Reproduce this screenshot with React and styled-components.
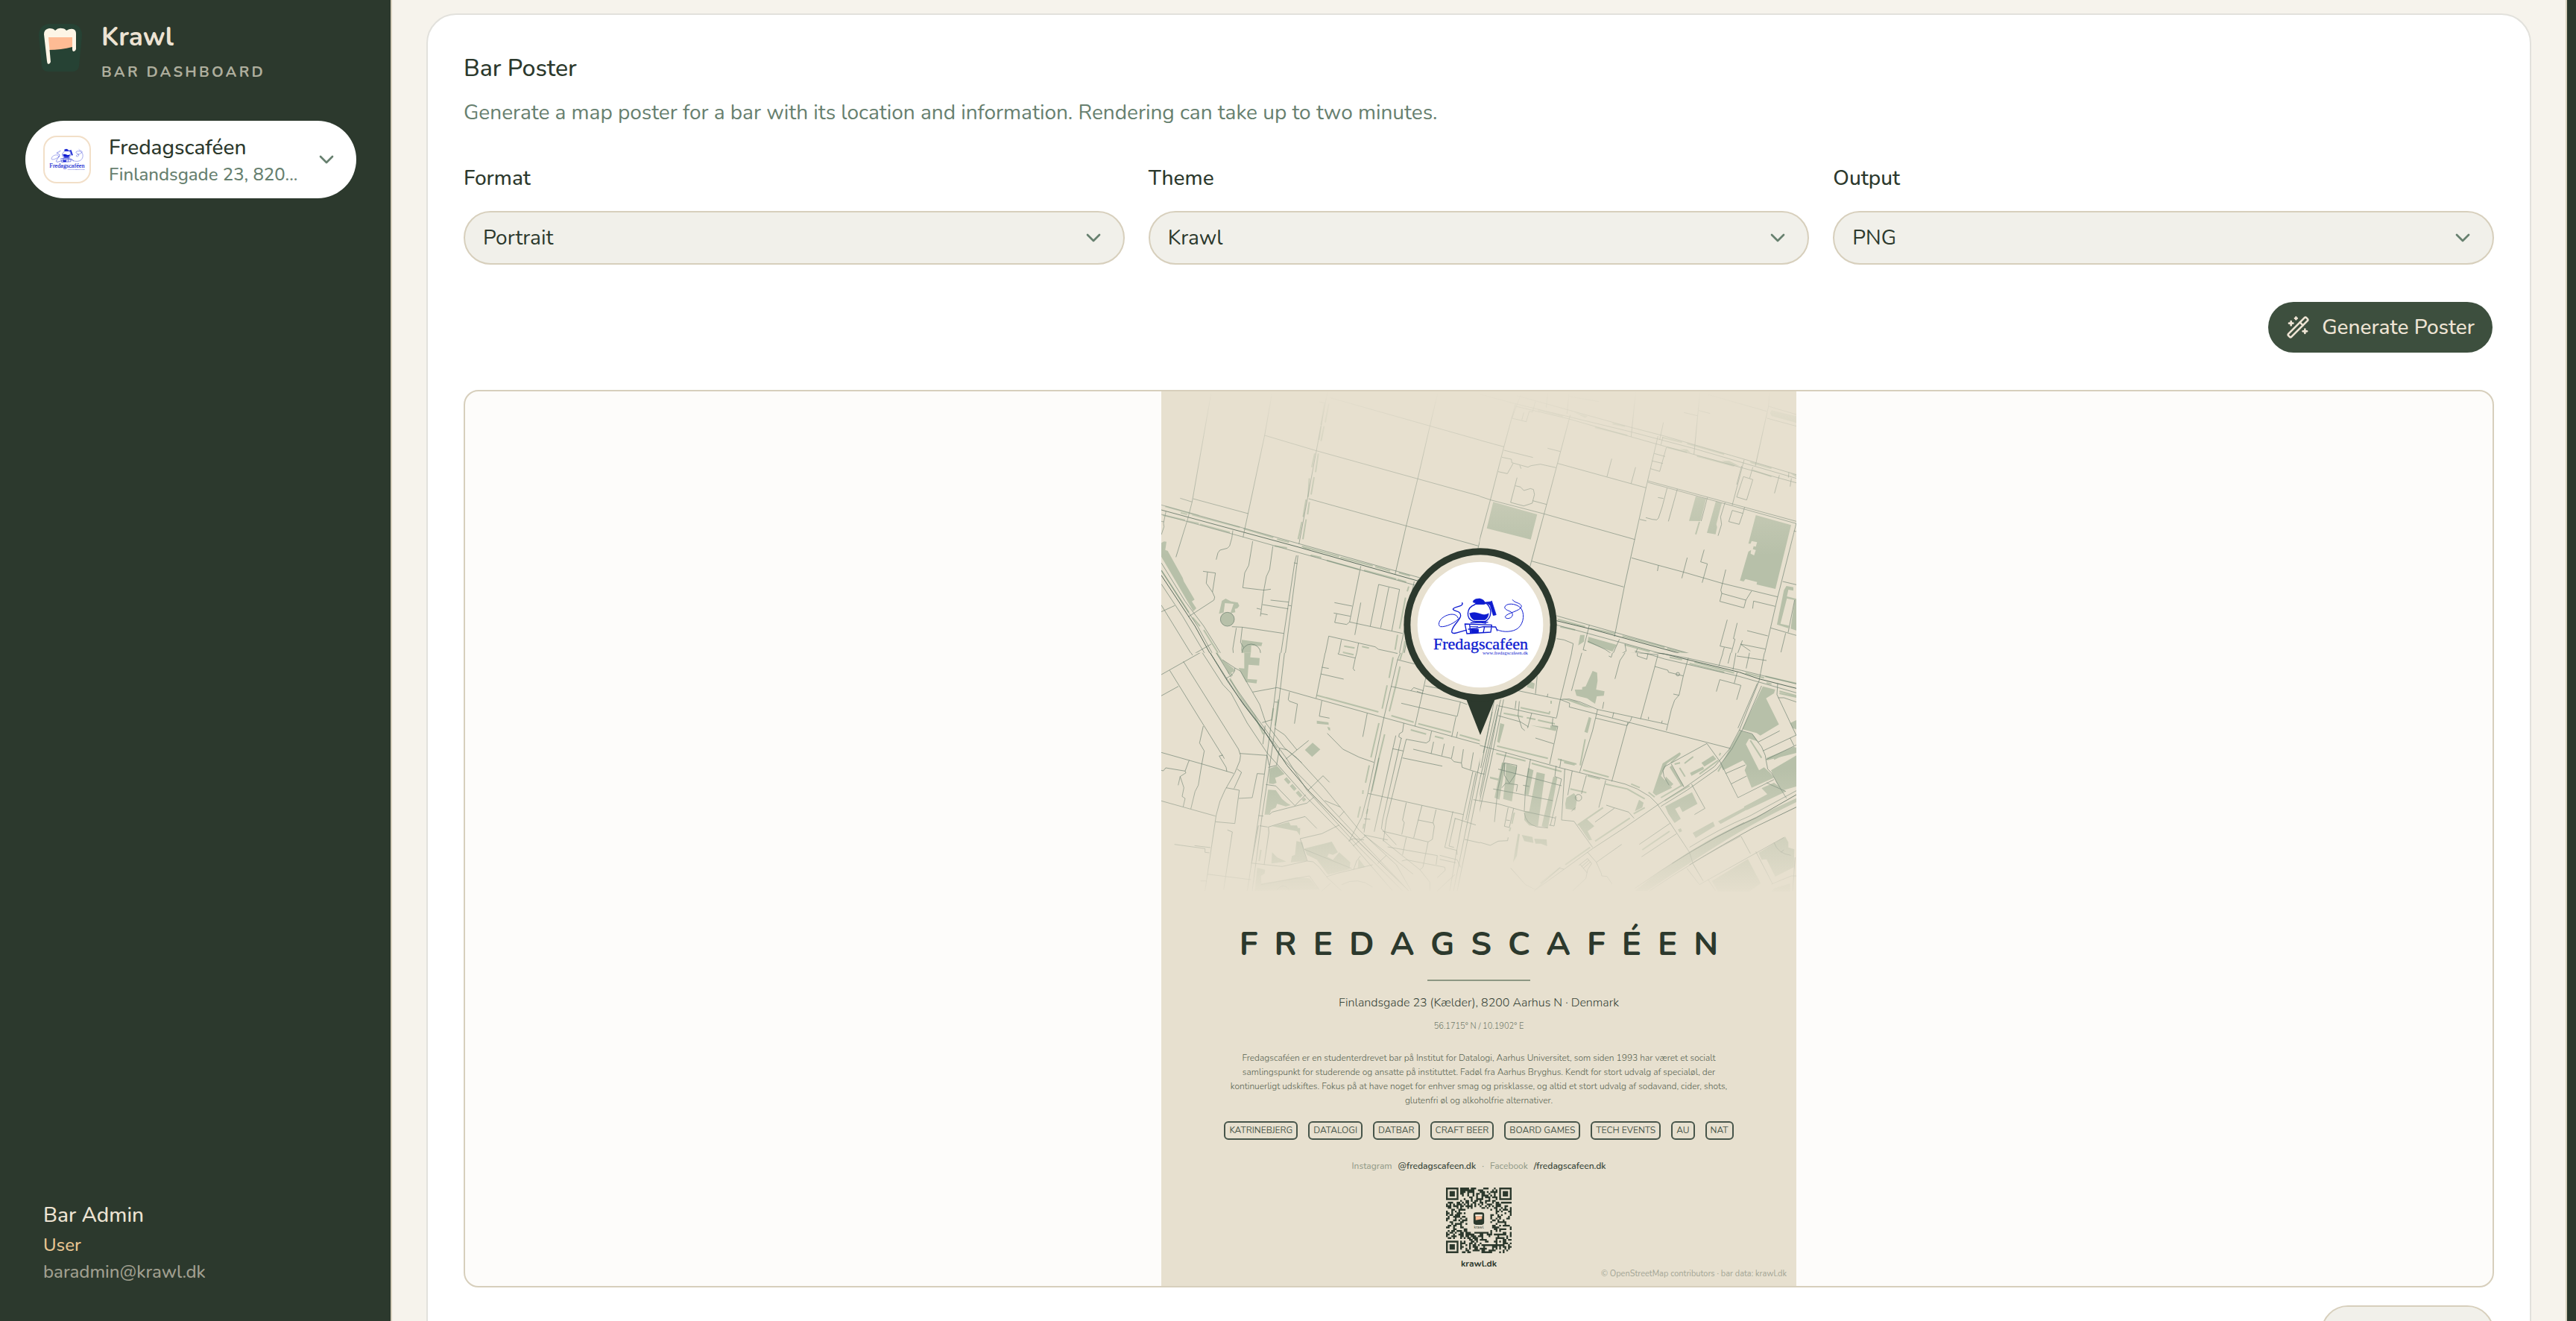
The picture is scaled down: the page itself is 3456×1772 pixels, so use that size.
import React, { useState } from 'react';
import styled, { createGlobalStyle } from 'styled-components';
import { ChevronDown, Download, WandSparkles } from 'lucide-react';

const GlobalStyle = createGlobalStyle`
  :root {
    --forest: #2c392d;
    --moss: #3d4f3e;
    --sage: #67806f;
    --cream: #ede3d3;
    --paper: #e7e0cf;
    --line: #d7cfbc;
    --fill: #f1f0ea;
  }

  * { box-sizing: border-box; }

  body {
    margin: 0;
    overflow: hidden;
    background: #f6f3ec;
    color: var(--forest);
    font-family: Nunito, Lato, sans-serif;
    font-size: 28px;
    line-height: 40px;
  }

  button, select { font: inherit; color: inherit; cursor: pointer; }
  h1, h2, h3, p, ul { margin: 0; padding: 0; }
  svg { display: block; flex: none; }
`;

const Shell = styled.div`
  display: flex;
  height: 100vh;
  overflow: hidden;
`;

/* ---------- sidebar ---------- */

const Sidebar = styled.aside`
  display: flex;
  flex-direction: column;
  flex: none;
  width: 526px;
  padding: 32px 46px 48px 34px;
  background: var(--forest);
  border-right: 2px solid var(--line);
`;

const Brand = styled.div`
  display: flex;
  align-items: flex-start;
  gap: 26px;
  padding-left: 18px;
`;

const BrandText = styled.div`
  display: flex;
  flex-direction: column;
  gap: 16px;
  padding-top: 2px;
`;

const BrandName = styled.h1`
  color: var(--cream);
  font-size: 35px;
  font-weight: 700;
  line-height: 32px;
`;

const BrandSub = styled.p`
  color: #aeae9d;
  font-size: 20px;
  font-weight: 700;
  letter-spacing: 0.16em;
  line-height: 30px;
  text-transform: uppercase;
`;

const Switcher = styled.button`
  display: flex;
  align-items: center;
  gap: 24px;
  height: 104px;
  margin-top: 50px;
  padding: 0 24px;
  border: none;
  border-radius: 52px;
  background: #fff;
  color: var(--forest);
  text-align: left;
`;

const Avatar = styled.span`
  display: flex;
  align-items: center;
  justify-content: center;
  flex: none;
  width: 64px;
  height: 64px;
  border: 2px solid #f2dfc8;
  border-radius: 18px;
  background: #fff;
`;

const SwitcherText = styled.span`
  display: flex;
  flex-direction: column;
  flex: 1;
  min-width: 0;
  padding-top: 4px;
  line-height: 36px;
  white-space: nowrap;
`;

const SwitcherName = styled.span`
  font-weight: 500;
`;

const SwitcherAddress = styled.span`
  color: var(--sage);
  font-size: 24px;
  font-weight: 500;
`;

const Account = styled.div`
  display: flex;
  flex-direction: column;
  margin-top: auto;
  padding-left: 24px;
  font-size: 24px;
  font-weight: 500;
  line-height: 36px;
`;

const AccountName = styled.p`
  margin-bottom: 2px;
  color: var(--cream);
  font-size: 28px;
  line-height: 40px;
`;

const AccountRole = styled.p`
  color: #e8c591;
`;

const AccountMail = styled.p`
  color: #a09f8f;
`;

/* ---------- content ---------- */

const Main = styled.main`
  flex: 1;
  min-width: 0;
  padding: 18px 46px 0;
`;

const Rail = styled.div`
  flex: none;
  width: 14px;
  border-left: 2px solid var(--line);
  background: var(--forest);
`;

const Card = styled.section`
  display: flex;
  flex-direction: column;
  padding: 49px 48px 48px;
  border: 2px solid #e2e1dc;
  border-radius: 40px;
  background: #fff;
`;

const CardTitle = styled.h2`
  font-size: 32px;
  font-weight: 500;
  line-height: 46px;
`;

const CardHint = styled.p`
  margin-top: 16px;
  color: var(--sage);
`;

const Fields = styled.div`
  display: grid;
  grid-template-columns: repeat(3, 1fr);
  gap: 32px;
  margin-top: 48px;
`;

const Field = styled.div`
  display: flex;
  flex-direction: column;
  gap: 24px;

  label { font-weight: 500; }
`;

const SelectBox = styled.div`
  display: grid;
  align-items: center;

  select, svg { grid-area: 1 / 1; }

  select {
    appearance: none;
    width: 100%;
    height: 72px;
    padding: 0 72px 0 24px;
    border: 2px solid var(--line);
    border-radius: 36px;
    background: var(--fill);
  }

  svg {
    justify-self: end;
    margin-right: 26px;
    color: var(--sage);
    pointer-events: none;
  }
`;

const Actions = styled.div`
  display: flex;
  justify-content: flex-end;
  margin-top: ${p => p.$gap}px;
`;

const Button = styled.button`
  display: flex;
  align-items: center;
  justify-content: center;
  gap: 16px;
  height: 72px;
  min-width: 232px;
  padding: 0 24px;
  border: 2px solid ${p => (p.$primary ? 'transparent' : 'var(--line)')};
  border-radius: 36px;
  background: ${p => (p.$primary ? 'var(--moss)' : 'var(--fill)')};
  background-clip: padding-box;
  color: ${p => (p.$primary ? 'var(--cream)' : 'var(--forest)')};
  font-weight: 500;
`;

const Preview = styled.div`
  display: flex;
  justify-content: center;
  margin-top: 48px;
  overflow: hidden;
  border: 2px solid var(--line);
  border-radius: 20px;
  background: #fdfcfa;
`;

/* ---------- poster ---------- */

const Poster = styled.article`
  display: flex;
  flex-direction: column;
  align-items: center;
  width: 852px;
  height: 1200px;
  background: var(--paper);
  text-align: center;
`;

const PosterTitle = styled.h3`
  margin-top: 32px;
  font-size: 44px;
  font-weight: 700;
  letter-spacing: 0.5em;
  line-height: 60px;
  text-indent: 0.5em;
`;

const Rule = styled.hr`
  width: 138px;
  height: 2px;
  margin: 17px 0 0;
  border: none;
  background: #8c9783;
`;

const PosterAddress = styled.p`
  margin-top: 17px;
  color: #364337;
  font-size: 16px;
  font-weight: 300;
  line-height: 24px;
`;

const PosterCoords = styled.p`
  margin-top: 12px;
  color: #6f7a6a;
  font-size: 11px;
  font-weight: 300;
  line-height: 16px;
`;

const PosterText = styled.p`
  margin-top: 25px;
  color: #56624f;
  font-size: 12px;
  font-weight: 300;
  line-height: 19px;
  white-space: pre-line;
`;

const Tags = styled.ul`
  display: flex;
  gap: 14px;
  margin-top: 18px;
  list-style: none;

  li {
    height: 25px;
    padding: 0 5px;
    border: 2px solid #47554a;
    border-radius: 6px;
    color: #4a574b;
    font-size: 12px;
    line-height: 20px;
  }
`;

const Socials = styled.p`
  display: flex;
  gap: 8px;
  margin-top: 25px;
  color: #8f9886;
  font-size: 12px;
  line-height: 20px;

  a {
    color: #3c4a3d;
    font-weight: 600;
    text-decoration: none;
  }
`;

const QrCaption = styled.p`
  margin-top: 7px;
  font-size: 12px;
  font-weight: 700;
  line-height: 14px;
`;

const Attribution = styled.p`
  align-self: flex-end;
  padding-right: 13px;
  color: #a3a595;
  font-size: 11px;
  line-height: 14px;
`;

const QrArt = styled.svg`
  margin-top: 19px;
`;

/* Map drawing, one entry per tile. Tiles are drawn at 3x and scaled down. */
const tiles = [
  {
    at: [-18, -15],
    clip: [0, 0, 1336, 1097],
    parks: `M54 655L65 649 75 650 70 683 80 687 140 795 145 810 188 883 177 890 195 918 183 930 54 710Z
      M298 888L313 879 335 890 362 895 368 908 360 918 350 920 352 934 332 938 345 900 310 897 305 935 286 940Z
      M378 1045L461 1056 457 1070 416 1068 414 1112 385 1112 375 1085Z`,
    verges: `M70 508L205 545M204 548L370 592M132 533L158 540M178 541L212 551M385 597L505 633M520 640L568 652M620 668L770 710M625 672L655 680M660 680L705 692
      M775 713L905 747M915 750L975 768M1010 775L1055 788M60 543L150 563M160 568L205 577M210 580L330 613M510 667L560 675M655 704L698 714M720 725L850 762M870 765L1000 800M1005 802L1040 812
      M711 95L697 180M697 185L688 240M672 295L660 350M650 395L645 470M637 480L625 550M620 570L605 640M728 95L714 170M709 185L697 245M686 295L675 370M669 390L657 460M650 490L643 540M637 560L624 640
      M1050 830L1044 850M1037 875L1013 1000M1005 1025L995 1085M1035 1050L1025 1110M790 1070L832 1078M862 1072L890 1078M785 1095L830 1105
      M54 765L165 935M180 955L210 990M225 1005L290 1110`,
    roads: `M255 50L178 490 160 560 113 712M130 475L178 490M182 477L404 537M500 50L470 222 383 632M470 222L682 285 1350 470
      M722 50L608 660M690 87L715 93M732 70L1350 245M647 477L1330 667M1167 50L1135 185 1087 393 1040 585 995 782M1350 590L1328 680
      M54 502L1095 795M54 540L380 630 1075 825M342 605L338 635 329 667 320 676 290 684 282 695 275 722
      M422 648L406 745 390 775 382 835 468 845 495 841M503 668L490 762 477 790 466 850 453 950
      M222 769L272 776 260 853M240 772L235 817 260 853 269 873 266 885 163 952M494 885L567 893M461 903L565 920M438 918L455 922M455 939L482 944
      M598 705L590 740 534 1110M604 705L600 740 552 1110M588 735L602 738M565 906L577 908
      M857 748L812 973 1025 1019M857 895L833 1025M751 895L822 909M748 937L815 950M760 940L752 975 800 983 812 973
      M929 822L1013 842 982 1008M929 822L895 990M970 833L937 997M1072 810L1010 1110M1088 800L1030 1110
      M712 1110L728 1030 915 1073 928 1083 1008 1100M779 1045L768 1103 825 1112M848 1058L838 1110
      M338 992L380 994 547 1019M356 997L342 1080 345 1110M380 994L373 1055 385 1075
      M54 735L150 890 225 990 300 1110M54 765L200 990 265 1110M54 820L140 950 235 1110M54 905L180 1110M54 932L108 907M178 1106L255 1062
      M73 527L63 575 65 590 54 622M54 568L65 570`,
    mains: 'M54 522L600 670 1088 808M54 785L190 990 256 1110',
    rings: [[320, 962, 28, true], [416, 1100, 38, false]],
  },
  {
    at: [422, -15],
    clip: [16, 0, 1274, 1097],
    parks: `M70 490L247 540 221 641 44 596Z M885 467L927 477 904 567 858 566Z M966 487L990 495 968 580 971 592 965 620 930 614Z
      M1127 543L1269 583 1206 840 1130 822 1132 812 1085 800 1078 810 1063 806 1097 690 1108 683 1106 698 1120 705 1127 683 1115 680 1118 668 1127 670 1132 652 1110 647 1106 658 1097 658Z
      M1190 121L1290 145 1290 172 1190 144 1184 132Z M1250 828L1278 833 1278 847 1258 843 1252 870 1290 880 1290 1007 1267 1000 1283 885 1252 878 1226 980 1260 988 1258 998 1212 983 1240 845Z
      M453 1033L567 1065 550 1092 530 1085 450 1055Z M420 1025L438 1025 435 1052 412 1067Z M395 128L450 145 440 152Z M990 325L1020 325 1060 345 1020 340Z M820 277L850 278 865 292Z M1265 375L1290 380 1290 390Z`,
    verges: `M550 175L600 185M750 230L830 250M850 255L1000 298M250 120L350 145M480 190L610 222M770 270L850 290M890 305L1040 345M1115 362L1190 388M1105 330L1190 355
      M330 962L440 992M460 998L560 1020M590 1030L760 1075M770 1080L880 1108M340 992L400 1005M600 1065L700 1092M900 570L885 620`,
    roads: `M165 62L625 190 760 225 1080 318 1290 380M0 52L160 95 625 208 878 275 1290 395M160 105L372 155 625 228 875 298 1290 413
      M180 60L145 153M160 95L113 268 59 480 5 680M0 237L113 268M113 282L230 311M105 310L143 318 145 332 210 350 222 344 260 338 323 352M150 335L127 376 90 368M177 343L182 356
      M145 153L203 167 215 125 228 128 240 85M193 130L185 160M290 50L283 110M375 50L367 135M375 65L495 86M380 140L285 500 218 750
      M289 274L340 287M166 392L140 492 193 506 227 495 236 460 232 440 220 436 193 444 180 430 160 425M229 485L285 500M0 462L60 482 275 538 640 641M330 335L685 433M547 316L528 388M643 350L625 416
      M643 50L625 228M755 170L740 240M733 225L725 260 685 433 600 820 558 1032M753 228L745 260M767 270L740 367 703 356M718 295L762 307M710 325L753 335
      M902 50L893 142 878 298M837 130L892 143M897 122L943 134M1182 50L1178 105 1125 345M935 58L1170 125M1178 105L1290 138M1172 153L1290 185
      M1080 320L1032 503M1070 345L1050 420M1115 350L1102 395M1077 388L1115 400 1090 482 1050 470ZM1222 382L1202 455M1270 395L1265 428M1260 370L1258 392
      M692 405L1290 568M692 411L1290 577M770 434L750 510 735 555 728 562 710 560 684 553M733 472L755 476M660 560L686 566M811 438L775 568M932 472L907 567
      M1003 492L985 550 989 580 975 626M1032 524L1075 536 1060 580 1018 569ZM1082 510L1075 536M1290 575L1215 872 1160 1110M1235 810L1290 823M1280 607L1290 609
      M627 715L735 745 835 772 990 817 1215 872M735 745L731 768M851 714L829 797M919 682L905 731 932 739 911 815M1006 762L986 845 990 858 982 890 1079 916 1087 885 1110 848M990 858L1087 885M1205 910L1118 889 1114 919
      M225 728L595 832M1012 964L983 1070 1030 1080M1052 977L1037 1040 1043 1042 1025 1110M1092 1008L1175 1029M1187 997L1290 1027M1247 1018L1228 1095M1283 885L1257 1015M1073 1047L1050 1110M1065 1062L1165 1082M1065 1062L1105 1090M1000 1075L990 1110
      M325 948L895 1110M325 985L455 1020 800 1115M457 985L432 1085 445 1088M325 1040L355 1045 392 1060 383 1110M578 1042L548 1110M450 1050L520 1083 545 1100M600 1062L605 1090 570 1110M650 1080L640 1110 695 1110M640 1090L700 1105`,
    mains: 'M325 968L470 1003 860 1110',
    rings: [],
  },
  {
    at: [-18, 345],
    clip: [0, 17, 1336, 963],
    parks: `M388 17L414 17 412 35 450 38 448 68 405 65 401 122 440 125 437 140 395 135 365 78 388 80Z M300 45L345 80 350 90 325 103Z
      M663 379L694 406 661 436 632 408Z M490 483L520 472 550 505 522 517 512 520 518 540 505 545 487 543Z
      M484 568L515 570 540 605 560 622 575 630 555 635 520 625 515 640 495 650 490 668 470 668Z
      M500 715L568 698 575 712 600 712 604 722 613 722 612 752 600 735Z M598 775L622 780 640 855 575 860 580 835 592 830Z
      M630 805L740 777 765 820 745 830 728 826 722 838 745 850 770 820 815 860 812 888 725 910 680 850 640 830Z
      M500 820L520 840 557 857 497 865Z M440 882L472 890 470 905 455 915 457 945 520 935 600 920 650 925 690 970 430 975Z M848 845L875 880 845 885Z M680 290L727 297 728 307 680 302Z M722 315L733 318 734 330 727 328Z`,
    verges: `M681 188L928 255M980 270L1070 296M1088 302L1220 337M1255 347L1342 372M1058 327L1120 344M1155 353L1190 362M987 35L971 118M1015 72L1000 140 972 253M963 148L943 242M930 300L898 438M953 345L930 440 901 575M891 470L876 540M855 635L845 680M866 570L865 585M885 645L880 665M870 705L866 725
      M785 15L828 25M1028 0L1015 45M265 0L340 110M330 120L370 190 430 270 465 345M525 205L512 310M455 810L448 855M505 240L498 290`,
    strips: 'M553 522L632 612',
    roads: `M54 105L240 0M163 0L180 27M215 10L302 145 335 180 400 300 480 420 640 600 808 770 985 975M240 0L375 210 520 400M265 0L335 115M300 45L350 78 372 90 450 225 475 300 550 400 600 440 710 560 850 730 1000 870 1060 975
      M330 125L440 280 560 445 640 570 850 800 1025 975M370 200L465 325 530 430 640 540 790 700 960 880 1050 975M510 320L550 347 600 408 555 445M600 408L647 370M530 400L560 408 620 460M315 120Q355 100 350 78
      M88 88L300 430 287 432 315 478 318 495M298 425L308 443M143 52L365 405 373 430 370 452 350 500 310 570 290 615 275 670 230 975
      M54 190L123 152M54 418L220 465 345 502M54 613L272 674M272 697L350 704 368 570 315 560M223 312L208 380 227 412 217 465 203 550 190 575 173 645
      M54 490L62 492 72 480 150 493 165 452 168 450M150 493L153 500 130 515 145 560 138 595 150 603 142 637M130 515L122 550
      M370 422L480 430 488 470M360 485L377 498 347 563M468 505L440 503 420 600 366 603M534 0L508 215 478 440 447 670 418 860 400 975M552 0L527 215 495 440 460 670 420 975M445 672L465 674M510 215L524 216M472 310L463 385M460 298L497 287M530 400L518 470 485 478
      M422 175L520 157 700 208 950 278 1350 388M570 175L565 205 570 212 602 223 590 302M700 210L690 272 731 280M717 0L677 200M700 75L728 80M696 102L788 123M768 0L766 22 835 38 826 80 833 90M845 0L835 38
      M883 260L865 355M722 341L785 405 850 437 910 458M1023 0L1005 45 950 278 885 585 860 680 810 775M930 440L885 640 870 740M1005 45L1073 62M925 0L1005 20
      M978 152L1105 180 1258 215 1285 225M1118 120L1105 180 1075 312M1020 220L1245 273 1258 215M1240 275L1223 355M1247 335L1242 357M1115 150L1180 162M1058 170L1070 157 1110 170M1083 172L1108 182
      M887 583L1270 668M998 350L911 737M1020 360L945 690 940 725 1000 790M1040 365L960 690 948 775M1030 300L1025 335 1012 343 1010 355 1022 362M1040 365L1120 380 1133 372 1142 332M985 403L1028 412
      M1068 405L1220 442 1232 455 1262 460 1265 478 1300 490 1350 505M1150 375L1140 423M1193 383L1183 431M1232 393L1222 442M1270 405L1262 460M1310 418L1298 487M1025 440L1185 473
      M1308 495L1270 668 1240 830 1215 975M1345 410L1230 975M1320 500L1280 690M1350 460L1245 975M1310 608L1350 615M1275 768L1350 785M1040 620L1025 690 1032 700 1022 748M1103 632L1088 690 1070 762M1160 648L1148 700 1153 715 1145 768 1128 778 945 735M1088 690L1148 702
      M870 750L965 770M870 750L1068 908M945 770L1095 890 1135 940 1135 975M1095 890L1107 880 1128 778M965 798L1165 833 1160 870M1022 855L1040 850 1195 880 1197 892 1165 922M1175 832L1245 850 1258 880M1175 848L1240 862M1235 910L1165 975M1040 760L1025 830
      M712 612L775 638M645 570L705 512 731 538M770 677L790 655M680 724L633 676 560 695 485 718M613 765L700 745 770 710M613 765L642 855M630 808L820 885M720 918L760 905 905 870M485 718L487 740 468 870M450 713L482 718M855 835L840 855 828 890M925 865L960 832M808 775L825 765 870 770M825 795L875 755M870 685L895 687M445 712L418 860
      M490 668L500 658 640 622 668 598M475 547L515 553 592 632 635 588M415 863L540 877 640 855 665 858 690 880 725 925 780 975M455 950L650 915 690 970M700 975L735 945
      M107 788L230 805 230 820 248 822M188 793L252 801M320 730L340 738 305 970M240 908L415 930M212 935L235 935M780 950Q845 915 905 960M520 970Q545 940 570 970
      M1228 655L1195 800 1243 812 1245 830M1237 683L1212 795 1232 800M1235 683L1320 710`,
    mains: 'M240 0L320 130 385 225 470 335 560 470 645 570 850 780 1050 975',
    rings: [],
  },
  {
    at: [422, 345],
    clip: [16, 17, 1274, 963],
    parks: `M470 90L488 97 490 130 484 165 518 172 515 190 487 192 480 222 465 212 448 200 405 190 398 165 428 165 428 155 442 152Z M205 155L212 130 237 140 233 163Z
      M105 458L120 462 95 608 75 600Z M122 462L165 475 145 615 110 605 118 530Z M57 515L100 525 98 533 57 523Z M210 480L232 490 212 590 195 585Z M245 497L278 505 250 715 215 712 195 690 197 655 215 655Z M312 515L328 520 290 722 265 715Z
      M98 300L115 305 95 380 86 375Z M455 275L465 280 450 340 437 335Z M300 310L328 312 322 332 220 308 300 320Z M345 200L400 210 470 240 440 235Z
      M752 462L820 418 826 423 770 462 745 512 790 560 725 592 712 580Z M787 470L838 552 828 556 780 478Z M765 515L795 545 785 555 762 530Z M908 460L955 430 968 445 920 475Z M862 500L915 475 918 485 868 512Z
      M1155 152L1205 165 1200 180 1168 200 1220 305 1145 350 1130 340 1072 325Z
      M1063 330L1115 345 1138 375 1130 372 1100 362 1087 385 1140 490 1160 478 1185 500 1200 520 1110 560 1082 490 1090 470 1075 450 995 490 985 470Z
      M1188 490L1290 430 1290 555 1230 572 1210 540Z M1080 635L1175 588 1150 562 1200 540 1248 575 1090 650Z M1170 440L1280 395 1290 400 1290 420 1172 450Z M1265 300L1290 288 1290 325 1275 320Z
      M762 635L870 578 892 625 832 658 820 635 802 645 825 685 800 702 775 665Z M873 742L955 697 962 715 885 762Z M975 695L1115 622 1120 632 985 706Z
      M412 708L445 685 477 715 450 735 468 770 455 772Z M657 608L675 620 670 640 640 655Z M813 728L825 723 830 735 820 740Z
      M1138 822L1245 757 1258 780 1258 800 1282 808 1280 880 1205 918 1170 848 1150 850Z M950 935L1095 847 1147 945 1100 978 975 978Z M1200 965L1265 945 1265 978 1190 978Z
      M640 975Q850 800 1100 690L1290 602 1290 618Q1120 700 1000 775T690 975Z
      M185 750L228 758 232 782 195 775Z M235 765L285 768 287 795 262 785 240 785Z M170 745L177 748 165 835 150 860 158 810Z M365 600L395 582 408 600 400 650 362 645 360 625Z`,
    verges: `M85 392L290 442M82 422L200 452M225 462L345 495M330 445L405 465M355 458L398 468M432 488L535 517M450 512L500 525M522 545L610 565 680 605M625 545L660 560M695 578L720 598M112 260L190 275M205 278L240 285M250 288L318 303M180 238L295 262 298 252M440 365L420 470M303 210L303 222
      M785 460L822 425M840 462L875 435M820 480L842 515M800 465L822 460M900 505L975 450M745 600L830 550M760 612L860 552M635 665L680 640M980 430L985 420M975 495L1060 345M410 710L512 640M480 775L620 682M670 810L780 735M155 660L145 705M140 720L135 735M360 870L460 800M335 885L260 945
      M780 35L830 45M860 60L1000 95M880 55L1040 98M1085 98L1160 118M1165 112L1290 140M1170 138L1190 143M1222 172L1290 190M1222 180L1290 195M1200 445L1290 400M1080 640L1190 580M1105 370L1150 440M380 565L445 580`,
    roads: `M640 0L850 38 1070 88 1290 142M620 0L760 42 1060 112 1290 178M390 0L340 205 325 278M430 5L385 170M555 0L545 35 535 30M600 5L602 15 580 48 560 122M650 10L650 30 688 43 693 20M605 12L733 25M733 25L720 75 663 283M720 72L773 87 775 95 835 110M855 38L835 110 818 187 800 208 787 245 767 330M795 183L818 188
      M1052 95L1040 140M968 173L982 125 1067 148 1050 206M1140 130L1062 325 1020 405 960 475 840 560 735 627 600 720 470 805 235 975M1150 150L1072 328 1030 405 970 485 850 570 745 635M1133 140L1055 320
      M0 385L340 480 540 530 600 545 650 565 700 595 730 625M730 625L782 702 860 820 875 868 915 935M100 155L340 205 375 203 420 215 490 245 770 305M340 205L378 220 376 235 480 262 1025 402M483 280L608 310 620 293M612 297L547 535M490 245L470 330 418 497M240 360L313 383M247 110L240 182M290 182L287 195M515 215L510 242M555 257L550 278M628 275L622 292M695 275L695 285M750 290L748 300
      M112 205L55 480 0 720M100 205L45 440 -10 720M86 225L35 450 0 590M75 205L20 480M92 240L60 405 10 640M66 255L30 420M90 230L225 260 208 320M90 270L180 295 212 315M175 212L170 270 185 320 197 330M162 210L158 242M225 260L325 280M310 280L307 310 330 313 297 465
      M122 418L112 455 88 570 75 698M220 445L212 490 200 560 195 655M323 472L318 515 345 525 300 712M358 485L345 690 395 695 470 800M388 492L370 590M445 510L425 585M523 530L495 640M0 500L35 505M0 610L90 625 195 655 320 682M90 485L345 552M70 565L150 580 310 612M115 460L165 470 160 505 135 542 115 510ZM105 560L120 542 168 548 163 575M190 550L215 555
      M525 630L555 640 615 658 637 683M480 698L557 643M130 640L115 715 135 720 152 643M122 690L137 692M295 710L315 714 322 675M195 660Q200 705 245 717L290 722
      M450 820L485 860 505 905 507 915 528 917 548 947M485 860L587 788M415 872L450 845 466 865 450 890 443 925 390 975M425 878L455 852M432 885L462 858M420 868L448 903M140 883L200 950 240 970M400 640L385 655
      M658 788L782 703M667 838L808 745M868 545L922 643 880 668M930 382L983 455 1055 600 1200 527M930 382L760 475 753 490 757 515 778 550M787 465L838 558M1005 503L1085 468M1027 545L1090 513M343 445L338 478
      M1060 328L1112 343 1132 372 1150 395 1165 430 1168 450 1175 485 1190 500 1215 545 1250 602M1170 540L1248 575M1135 377L1223 331M1155 412L1290 348M1168 447L1290 388M1265 360L1280 390M1215 140L1212 185 1290 350M1217 198L1240 198 1290 215
      M1000 0L978 70M1050 30L1170 48M1030 0L1015 60M1050 0L1035 85M1105 0L1088 80M1165 0L1140 130M860 800Q980 725 1100 675L1290 572M640 965Q860 810 1080 700M700 975Q900 840 1065 755
      M1067 755L1105 825M1127 817L1195 948M900 950L1240 760M850 885L900 950M875 868L915 935M935 930L965 975M1200 780Q1215 825 1268 832M1227 820L1240 810M1190 948L1270 915 1290 915M1285 840L1275 975
      M0 775L58 792 90 775 128 773 130 760M335 883L355 888M340 880L240 970`,
    mains: 'M625 0L760 22 1060 95 1140 122 1290 160M790 865Q960 755 1130 680L1290 588M860 870Q1000 785 1120 720L1290 638',
    rings: [[413, 600, 13, false], [813, 103, 7, false]],
  },
];

function MapArt() {
  return (
    <svg width="852" height="680" viewBox="0 0 852 680" role="img" aria-label="Map around Finlandsgade 23, Aarhus">
      <defs>
        <linearGradient id="fadeTop" x1="0" y1="0" x2="0" y2="1">
          <stop offset="0" stopColor="#e7e0cf" />
          <stop offset="0.15" stopColor="#e7e0cf" stopOpacity="0.85" />
          <stop offset="1" stopColor="#e7e0cf" stopOpacity="0" />
        </linearGradient>
        <linearGradient id="fadeBottom" x1="0" y1="0" x2="0" y2="1">
          <stop offset="0" stopColor="#e7e0cf" stopOpacity="0" />
          <stop offset="1" stopColor="#e7e0cf" />
        </linearGradient>
        {tiles.map((t, i) => (
          <clipPath key={i} id={`tile${i}`}>
            <rect x={t.clip[0]} y={t.clip[1]} width={t.clip[2]} height={t.clip[3]} />
          </clipPath>
        ))}
      </defs>
      {tiles.map((t, i) => (
        <g key={i} transform={`translate(${t.at[0]} ${t.at[1]}) scale(0.33333)`}>
          <g clipPath={`url(#tile${i})`} fill="none">
            <path d={t.parks} fill="#b7c0a9" />
            <path d={t.verges} stroke="#b7c0a9" strokeWidth="6" />
            {t.strips && <path d={t.strips} stroke="#b7c0a9" strokeWidth="14" strokeDasharray="26 10" />}
            {t.rings.map(([cx, cy, r, solid]) => (
              <circle key={cx} cx={cx} cy={cy} r={r} fill={solid ? '#b7c0a9' : 'none'} stroke="#64796a" strokeWidth="2" />
            ))}
            <path d={t.roads} stroke="#6c8071" strokeWidth="2" />
            <path d={t.mains} stroke="#56695b" strokeWidth="3" />
          </g>
        </g>
      ))}
      <rect width="852" height="220" fill="url(#fadeTop)" />
      <rect y="505" width="852" height="175" fill="url(#fadeBottom)" />
      <g transform="translate(302 195) scale(0.33333)">
        <path d="M320 650L438 650 378 798Z" fill="#2c392d" />
        <circle cx="378" cy="354" r="308" fill="#2c392d" />
        <circle cx="378" cy="354" r="281" fill="#e7e0cf" />
        <circle cx="378" cy="354" r="253" fill="#fff" />
        <CafeMark />
      </g>
    </svg>
  );
}

function CafeMark() {
  return (
    <g fill="none" stroke="#0d1bd0" strokeLinecap="round" strokeLinejoin="round">
      <path d="M350 257Q358 248 376 249 392 252 397 264L420 261 424 258 442 314 430 317 417 275 404 268 392 272 356 272 359 266 350 264Z" fill="#0d1bd0" strokeWidth="2" />
      <path d="M356 273C322 285 318 328 350 341H398C424 326 428 290 402 268" strokeWidth="4" />
      <path d="M335 308Q355 300 375 309T412 308Q410 328 396 335H352Q338 328 335 308Z" fill="#0d1bd0" strokeWidth="1" />
      <path d="M340 346L408 344M316 351L424 355 420 384 324 390ZM335 352L338 386M395 362L390 386M330 372L360 368 390 362 440 363 446 378M352 340L400 348" strokeWidth="4" />
      <path d="M341 372H370V386H341ZM338 362H368" fill="#0d1bd0" strokeWidth="3" />
      <path d="M305 266C314 282 268 280 268 292 272 302 300 296 299 318 296 340 262 358 263 384 270 398 300 378 322 376" strokeWidth="4" />
      <path d="M288 326C282 306 250 310 232 322 210 334 206 358 218 362 240 364 280 346 294 326" strokeWidth="3" />
      <path d="M446 374C470 386 510 384 530 368 556 346 556 304 540 286 520 266 480 266 476 284 478 300 508 296 508 314 506 330 480 334 478 322 484 306 540 300 544 280 540 264 516 268 508 254" strokeWidth="3" />
      <g fill="#0d1bd0" stroke="none" fontFamily="'Palatino Linotype', 'Liberation Serif', serif" fontWeight="400">
        <text x="189" y="452" fontSize="66" stroke="#0d1bd0" strokeWidth="1">Fredagscaféen</text>
        <text x="387" y="474" fontSize="20">www.fredagscafeen.dk</text>
      </g>
    </g>
  );
}

function BeerLogo() {
  return (
    <svg width="58" height="64" viewBox="0 0 58 64" aria-hidden="true">
      <path d="M13 0H45Q58 2 58 16L54 57Q53 63 46 64H12Q5 63 4 57L0 16Q0 2 13 0Z" fill="#264234" />
      <path d="M13 18H45V31Q30 35 13 35Z" fill="#febb94" />
      <path d="M7 14Q7 7 14 6 20 6 22 9 26 5 31 6 35 6 37 9 42 6 46 7 50 8 50 13V34Q49 37 47 37 45 37 45 34V18H13L16 51Q15 54 13 54 11 53 11 50Z" fill="#fdf5e6" />
    </svg>
  );
}

/* Version 5 code: 37 modules a side, logo in the middle. */
const QR = 37;

function qrPath() {
  let seed = 20031;
  let d = '';
  const near = (x, y, cx, cy, r) => Math.max(Math.abs(x - cx), Math.abs(y - cy)) <= r;
  for (let y = 0; y < QR; y++) {
    for (let x = 0; x < QR; x++) {
      seed = (seed * 16807) % 2147483647;
      let on = seed % 100 < 52;
      for (const [cx, cy] of [[3, 3], [33, 3], [3, 33]]) {
        if (near(x, y, cx, cy, 4)) {
          const ring = Math.max(Math.abs(x - cx), Math.abs(y - cy));
          on = ring < 2 || ring === 3;
        }
      }
      if (near(x, y, 30, 30, 2)) on = Math.max(Math.abs(x - 30), Math.abs(y - 30)) !== 1;
      if (near(x, y, 18, 18, 6)) on = false;
      if (on) d += `M${x} ${y}h1v1h-1z`;
    }
  }
  return d;
}

function QrCode() {
  return (
    <QrArt width="88" height="88" viewBox="0 0 37 37" role="img" aria-label="QR code for krawl.dk">
      <path d={qrPath()} fill="#2c392d" />
      <rect x="15.5" y="14" width="6" height="7" rx="1.4" fill="#2c392d" />
      <path d="M16.5 15.2h4v1h-4z" fill="#fdf5e6" />
      <path d="M16.7 16.2h3.6v1.6l-3.6 .6z" fill="#febb94" />
      <text x="18.5" y="23.2" fontSize="2.2" textAnchor="middle" fill="#2c392d">krawl</text>
    </QrArt>
  );
}

const fields = [
  { id: 'format', label: 'Format', options: ['Portrait', 'Landscape'] },
  { id: 'theme', label: 'Theme', options: ['Krawl', 'Light', 'Dark'] },
  { id: 'output', label: 'Output', options: ['PNG', 'PDF'] },
];

const tags = ['KATRINEBJERG', 'DATALOGI', 'DATBAR', 'CRAFT BEER', 'BOARD GAMES', 'TECH EVENTS', 'AU', 'NAT'];

const about = `Fredagscaféen er en studenterdrevet bar på Institut for Datalogi, Aarhus Universitet, som siden 1993 har været et socialt
samlingspunkt for studerende og ansatte på instituttet. Fadøl fra Aarhus Bryghus. Kendt for stort udvalg af specialøl, der
kontinuerligt udskiftes. Fokus på at have noget for enhver smag og prisklasse, og altid et stort udvalg af sodavand, cider, shots,
glutenfri øl og alkoholfrie alternativer.`;

function SelectField({ id, label, options }) {
  const [value, setValue] = useState(options[0]);
  return (
    <Field>
      <label htmlFor={id}>{label}</label>
      <SelectBox>
        <select id={id} value={value} onChange={e => setValue(e.target.value)}>
          {options.map(o => <option key={o}>{o}</option>)}
        </select>
        <ChevronDown size={32} />
      </SelectBox>
    </Field>
  );
}

export default function App() {
  return (
    <Shell>
      <GlobalStyle />
      <Sidebar>
        <Brand>
          <BeerLogo />
          <BrandText>
            <BrandName>Krawl</BrandName>
            <BrandSub>Bar Dashboard</BrandSub>
          </BrandText>
        </Brand>
        <Switcher type="button">
          <Avatar>
            <svg width="48" height="30" viewBox="186 244 388 236" aria-hidden="true"><CafeMark /></svg>
          </Avatar>
          <SwitcherText>
            <SwitcherName>Fredagscaféen</SwitcherName>
            <SwitcherAddress>Finlandsgade 23, 820...</SwitcherAddress>
          </SwitcherText>
          <ChevronDown size={32} color="#67806f" />
        </Switcher>
        <Account>
          <AccountName>Bar Admin</AccountName>
          <AccountRole>User</AccountRole>
          <AccountMail>baradmin@krawl.dk</AccountMail>
        </Account>
      </Sidebar>
      <Main>
        <Card>
          <CardTitle>Bar Poster</CardTitle>
          <CardHint>
            Generate a map poster for a bar with its location and information. Rendering can take up to two minutes.
          </CardHint>
          <Fields>
            {fields.map(f => <SelectField key={f.id} {...f} />)}
          </Fields>
          <Actions $gap={48}>
            <Button type="button" $primary>
              <WandSparkles size={32} />
              Generate Poster
            </Button>
          </Actions>
          <Preview>
            <Poster>
              <MapArt />
              <PosterTitle>FREDAGSCAFÉEN</PosterTitle>
              <Rule />
              <PosterAddress>Finlandsgade 23 (Kælder), 8200 Aarhus N · Denmark</PosterAddress>
              <PosterCoords>56.1715° N / 10.1902° E</PosterCoords>
              <PosterText>{about}</PosterText>
              <Tags>
                {tags.map(t => <li key={t}>{t}</li>)}
              </Tags>
              <Socials>
                <span>Instagram</span>
                <a href="#instagram">@fredagscafeen.dk</a>
                <span>·</span>
                <span>Facebook</span>
                <a href="#facebook">/fredagscafeen.dk</a>
              </Socials>
              <QrCode />
              <QrCaption>krawl.dk</QrCaption>
              <Attribution>© OpenStreetMap contributors · bar data: krawl.dk</Attribution>
            </Poster>
          </Preview>
          <Actions $gap={24}>
            <Button type="button" aria-label="Download">
              <Download size={32} />
            </Button>
          </Actions>
        </Card>
      </Main>
      <Rail />
    </Shell>
  );
}
